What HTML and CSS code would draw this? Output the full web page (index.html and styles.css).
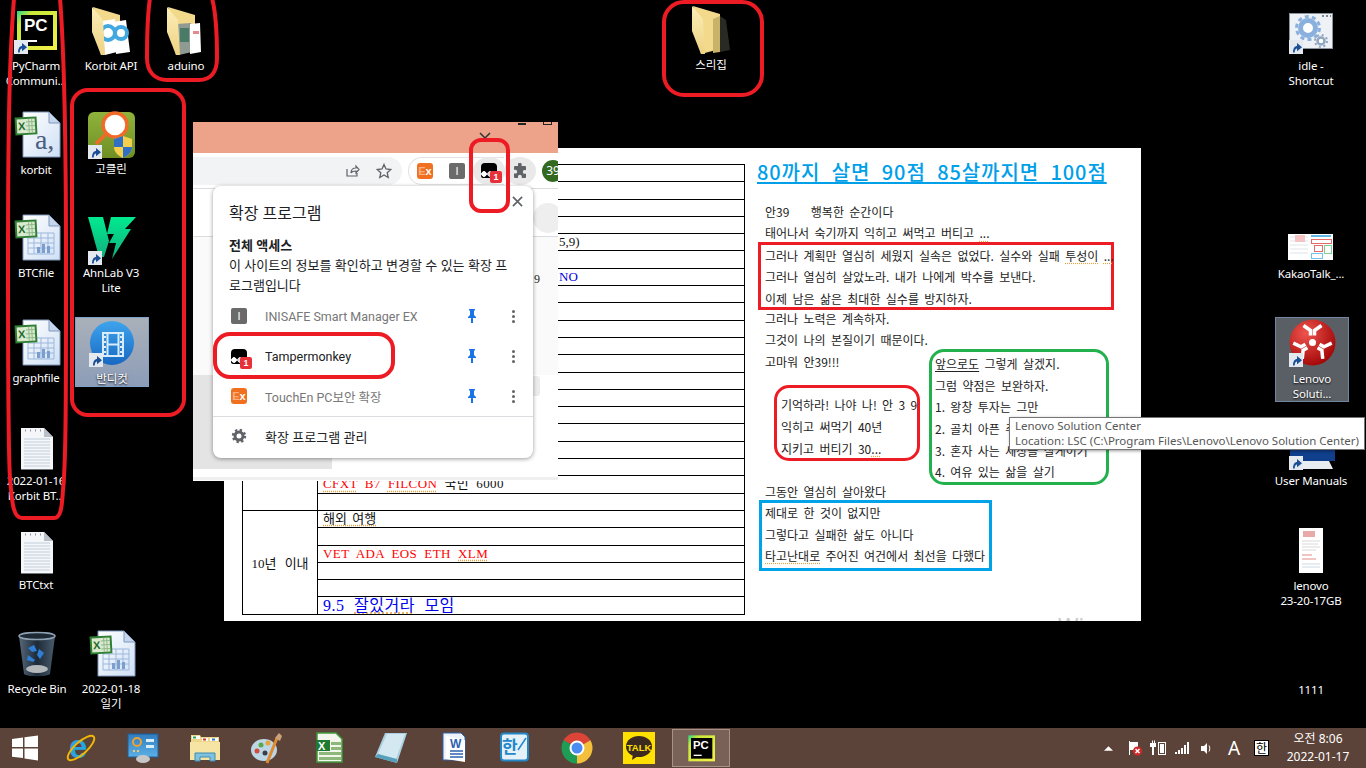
FILE: index.html
```html
<!DOCTYPE html>
<html lang="ko">
  <head>
    <meta charset="utf-8">
    <title>Desktop</title>
    <link rel="stylesheet" href="styles.css">
  </head>
  <body>
    <svg class="sprite" xmlns="http://www.w3.org/2000/svg">
      <defs>
        <linearGradient id="g-pc" x1="0" y1="0" x2="1" y2="1"><stop offset="0" stop-color="#21d789"/><stop offset=".2" stop-color="#c8e83a"/><stop offset="1" stop-color="#f4f04a"/></linearGradient>
        <linearGradient id="g-page" x1="0" y1="0" x2="1" y2="1"><stop offset="0" stop-color="#ffffff"/><stop offset="1" stop-color="#cfe0f5"/></linearGradient>
        <linearGradient id="g-flap" x1="0" y1="0" x2="0" y2="1"><stop offset="0" stop-color="#fbeeb8"/><stop offset="1" stop-color="#efd283"/></linearGradient>
        <linearGradient id="g-bin" x1="0" y1="0" x2="1" y2="0"><stop offset="0" stop-color="#56687a"/><stop offset=".5" stop-color="#1d2a38"/><stop offset="1" stop-color="#4a5c6e"/></linearGradient>
        <linearGradient id="g-goc" x1="0" y1="0" x2="0" y2="1"><stop offset="0" stop-color="#8fb33c"/><stop offset="1" stop-color="#6f8f24"/></linearGradient>
        <linearGradient id="g-v3" x1="0" y1="0" x2="0" y2="1"><stop offset="0" stop-color="#00ea8f"/><stop offset="1" stop-color="#12b07e"/></linearGradient>
        <linearGradient id="g-band" x1="0" y1="0" x2="0" y2="1"><stop offset="0" stop-color="#3fa4ec"/><stop offset="1" stop-color="#1768c2"/></linearGradient>
        <radialGradient id="g-len" cx=".35" cy=".3" r=".8"><stop offset="0" stop-color="#f0544e"/><stop offset="1" stop-color="#9c0000"/></radialGradient>
        <linearGradient id="g-cp" x1="0" y1="0" x2="0" y2="1"><stop offset="0" stop-color="#2f7cc0"/><stop offset="1" stop-color="#5cb0e4"/></linearGradient>
        <g id="sc">
          <rect width="14" height="14" fill="#e4e9ef"/>
          <path d="M4 12.5C4 8 6 6 8 6V3l5 4.2-5 4V8.6c-1.2 0-2.2 1.400-2.300 3.900z" fill="#1b4f96"/>
        </g>
        <g id="xl-badge" transform="rotate(-3 13 16)">
          <rect x="3" y="7" width="22" height="18" fill="#2f7f35"/>
          <rect x="5" y="9" width="18" height="14" fill="#dbe9cf"/>
          <path d="M14 12h9M14 16h9M14 20h9M17 9v14M20 9v14" stroke="#8fb98a"/>
          <text x="6" y="20" class="svg-bold" font-size="11" fill="#1d6b2a">X</text>
        </g>
        <g id="xl-page">
          <path d="M11 2h26l11 11v34H11z" fill="url(#g-page)" stroke="#7f97bb"/>
          <path d="M37 2v11h11z" fill="#c5d6ec" stroke="#7f97bb"/>
        </g>
        <g id="xl-grid">
          <path d="M16 20h26v21H16zM16 25h26M16 30h26M16 35h26M22 20v21M29 20v21M36 20v21" fill="none" stroke="#9bb7dc"/>
          <path d="M25 40v-6h3v6zM30 40v-9h3v9zM35 40v-7h3v7z" fill="#7c9ecf"/>
        </g>
        <g id="txt-page">
          <path d="M9 7h23l9 9v33H9z" fill="#f4f6f9"/>
          <path d="M9 49h32v-1H9z" fill="#6f7780"/>
          <path d="M32 7v9h9z" fill="#b8bfc8"/>
          <path d="M12 18h26M12 21h26M12 24h26M12 27h26M12 30h26M12 33h26M12 36h26M12 39h26M12 42h26M12 45h26" stroke="#c3cedb"/>
          <path d="M13 9.500h1M18 9.500h1M23 9.500h1M28 9.500h1" stroke="#8b9199" stroke-width="2"/>
        </g>
        <g id="pc-mark">
          <rect x="5" y="5" width="40" height="39" fill="url(#g-pc)"/>
          <rect x="9" y="9" width="32" height="31" fill="#000"/>
          <text x="12" y="25" class="svg-bold" font-size="17" fill="#fff">PC</text>
          <rect x="13" y="34" width="12" height="2" fill="#fff"/>
        </g>
        <g id="folder-back">
          <path d="M6 1l27 8v35l-19 5z" fill="#f2d98c"/>
        </g>
        <g id="folder-flap">
          <path d="M5 1l11 13 2 35h-4L5 26z" fill="url(#g-flap)"/>
        </g>
      </defs>
    </svg>

    <main class="desktop">
      <section class="doc">
        <table class="sheet">
          <tr><td class="sheet-side" rowspan="20"></td><td></td></tr>
          <tr><td></td></tr>
          <tr><td></td></tr>
          <tr><td></td></tr>
          <tr><td class="sheet-far">5,9)</td></tr>
          <tr><td></td></tr>
          <tr><td class="sheet-far sheet-blue">NO</td></tr>
          <tr><td></td></tr>
          <tr><td></td></tr>
          <tr><td></td></tr>
          <tr><td></td></tr>
          <tr><td></td></tr>
          <tr><td></td></tr>
          <tr><td></td></tr>
          <tr><td></td></tr>
          <tr><td></td></tr>
          <tr><td></td></tr>
          <tr><td></td></tr>
          <tr><td class="sheet-red"><u class="sp">CFXT</u> B7 <u class="sp">FILCON</u> <span class="sheet-ink">국빈 6000</span></td></tr>
          <tr><td></td></tr>
          <tr><td class="sheet-side" rowspan="6">10년 이내</td><td class="sheet-trip"><u class="sp">해외 여행</u></td></tr>
          <tr><td></td></tr>
          <tr><td class="sheet-red">VET ADA EOS ETH <u class="sp">XLM</u></td></tr>
          <tr><td></td></tr>
          <tr><td></td></tr>
          <tr><td class="sheet-big">9.5 <u class="sp">잘있거라</u> 모임</td></tr>
        </table>

        <div class="notes">
          <h1 class="doc-title">80까지 살면 90점 85살까지면 100점</h1>
          <p class="nl nl-in">안39 &nbsp; &nbsp;행복한 순간이다</p>
          <p class="nl nl-in">태어나서 숙기까지 익히고 써먹고 버티고 <u class="sp">...</u></p>
          <div class="box-plan">
            <p class="nl">그러나 계획만 열심히 세웠지 실속은 없었다. 실수와 실패 <u class="sp">투성이</u> <u class="sp">...</u></p>
            <p class="nl">그러나 열심히 살았노라. 내가 나에게 박수를 보낸다.</p>
            <p class="nl">이제 남은 삶은 최대한 실수를 방지하자.</p>
          </div>
          <div class="notes-split">
            <div>
              <p class="nl nl-in">그러나 노력은 계속하자.</p>
              <p class="nl nl-in">그것이 나의 본질이기 때문이다.</p>
              <p class="nl nl-in">고마워 안39!!!</p>
              <div class="box-remember">
                <p class="nl">기억하라! 나야 나! 안 3 9</p>
                <p class="nl">익히고 써먹기 40년</p>
                <p class="nl">지키고 버티기 30<u class="sp">...</u></p>
              </div>
              <p class="nl nl-in nl-after">그동안 열심히 살아왔다</p>
            </div>
            <div class="box-plan-next">
              <p class="nl"><u class="sp-plain">앞으로도</u> 그렇게 살겠지.</p>
              <p class="nl">그럼 약점은 보완하자.</p>
              <p class="nl">1. 왕창 투자는 그만</p>
              <p class="nl">2. 골치 아픈 주식 그만</p>
              <p class="nl">3. 혼자 사는 세상을 살게이기</p>
              <p class="nl">4. 여유 있는 삶을 살기</p>
            </div>
          </div>
          <div class="box-life">
            <p class="nl">제대로 한 것이 없지만</p>
            <p class="nl">그렇다고 실패한 삶도 아니다</p>
            <p class="nl"><u class="sp">타고난대로</u> 주어진 여건에서 최선을 다했다</p>
          </div>
        </div>
        <span class="doc-mark">Win</span>
      </section>

      <section class="browser">
        <div class="browser-title">
          <svg class="browser-caret" viewBox="0 0 12 7"><path d="M1 1l5 5 5-5" fill="none" stroke="#333" stroke-width="1.500"/></svg>
          <span class="browser-min"></span>
          <span class="browser-max"></span>
        </div>
        <div class="toolbar">
          <div class="omnibox">
            <svg class="tool-ico" viewBox="0 0 16 16"><path d="M3 6v7h10v-3M7 10c0-3 2-5 5-5V3l3 3.500-3 3.500V8c-2 0-4 0-5 2z" fill="none" stroke="#5f6368" stroke-width="1.200"/></svg>
            <svg class="tool-ico" viewBox="0 0 16 16"><path d="M8 1.500l2 4.500 4.800.5-3.600 3.200 1 4.800L8 12l-4.200 2.500 1-4.800L1.200 6.500 6 6z" fill="none" stroke="#5f6368" stroke-width="1.300"/></svg>
          </div>
          <div class="ext-group">
            <span class="ext-slot"><span class="ext-ex"><i>E</i>x</span></span>
            <span class="ext-slot"><span class="ext-i">I</span></span>
            <span class="ext-slot ext-on"><span class="ext-tm"><span class="tm-badge">1</span></span></span>
          </div>
          <span class="ext-slot ext-on">
            <svg class="tool-ico" viewBox="0 0 16 16"><path d="M6 1.500a1.800 1.800 0 0 1 3.600 0V3H13a1 1 0 0 1 1 1v3h-1.300a1.900 1.900 0 0 0 0 3.800H14V14a1 1 0 0 1-1 1h-3.200v-1.300a1.900 1.900 0 0 0-3.800 0V15H3a1 1 0 0 1-1-1v-3.400h1.300a1.900 1.900 0 0 0 0-3.800H2V4a1 1 0 0 1 1-1h3z" fill="#5f6368"/></svg>
          </span>
          <span class="avatar">39</span>
        </div>
        <div class="page">
          <div class="page-line"></div>
          <div class="page-soft"></div>
          <div class="page-band"></div>
          <div class="page-foot"></div>
          <span class="page-dot"></span>
          <span class="page-bar"></span>
          <span class="page-nine">9</span>
        </div>

        <div class="menu">
          <svg class="menu-close" viewBox="0 0 12 12"><path d="M1 1l10 10M11 1L1 11" stroke="#5f6368" stroke-width="1.800"/></svg>
          <h2 class="menu-title">확장 프로그램</h2>
          <h3 class="menu-head">전체 액세스</h3>
          <p class="menu-desc">이 사이트의 정보를 확인하고 변경할 수 있는 확장 프로그램입니다</p>
          <div class="menu-row">
            <span class="row-ico ext-i">I</span>
            <span class="row-name row-dim">INISAFE Smart Manager EX</span>
            <svg class="row-pin" viewBox="0 0 10 14"><path d="M2 0h6v1L7 2v4l2 2v1H6v5H4V9H1V8l2-2V2L2 1z" fill="#1a73e8"/></svg>
            <span class="row-dots"><i></i><i></i><i></i></span>
          </div>
          <div class="menu-row">
            <span class="row-ico ext-tm"><span class="tm-badge">1</span></span>
            <span class="row-name">Tampermonkey</span>
            <svg class="row-pin" viewBox="0 0 10 14"><path d="M2 0h6v1L7 2v4l2 2v1H6v5H4V9H1V8l2-2V2L2 1z" fill="#1a73e8"/></svg>
            <span class="row-dots"><i></i><i></i><i></i></span>
          </div>
          <div class="menu-row">
            <span class="row-ico ext-ex"><i>E</i>x</span>
            <span class="row-name row-dim">TouchEn PC보안 확장</span>
            <svg class="row-pin" viewBox="0 0 10 14"><path d="M2 0h6v1L7 2v4l2 2v1H6v5H4V9H1V8l2-2V2L2 1z" fill="#1a73e8"/></svg>
            <span class="row-dots"><i></i><i></i><i></i></span>
          </div>
          <div class="menu-manage">
            <svg class="manage-gear" viewBox="0 0 16 16"><circle cx="8" cy="8" r="4" fill="none" stroke="#5f6368" stroke-width="3"/><circle cx="8" cy="8" r="6" fill="none" stroke="#5f6368" stroke-width="2.400" stroke-dasharray="2.300 2.410"/></svg>
            <span>확장 프로그램 관리</span>
          </div>
        </div>
      </section>

      <!-- desktop icons -->
      <a class="desk-icon at-pycharm">
        <svg class="ico" viewBox="0 0 48 48"><use href="#pc-mark"/><use href="#sc" x="2" y="34"/></svg>
        <span>PyCharm<br>Communi...</span>
      </a>
      <a class="desk-icon at-korbitapi">
        <svg class="ico" viewBox="0 0 48 48"><use href="#folder-back"/>
          <path d="M15 15l13-2 2 33-12 3z" fill="#fff"/><path d="M26 16l13-2 4 32-14 2z" fill="#fff"/>
          <circle cx="21" cy="27" r="7" fill="none" stroke="#43a8e0" stroke-width="4"/><circle cx="34" cy="27" r="6" fill="none" stroke="#43a8e0" stroke-width="4"/>
          <use href="#folder-flap"/></svg>
        <span>Korbit API</span>
      </a>
      <a class="desk-icon at-aduino">
        <svg class="ico" viewBox="0 0 48 48"><use href="#folder-back"/>
          <path d="M15 18l14-1 1 29-13 3z" fill="#8e9a92"/><path d="M18 22h9v14h-9z" fill="#4a7a68"/><path d="M28 18l10-1 1 29-11 2z" fill="#fff"/><path d="M31 25h6v3h-6z" fill="#e58a8a"/>
          <use href="#folder-flap"/></svg>
        <span>aduino</span>
      </a>
      <a class="desk-icon at-sriz">
        <svg class="ico" viewBox="0 0 48 48"><use href="#folder-back"/>
          <path d="M33 11l6 4 4 30-10 2z" fill="#2a2a24"/><path d="M26 14l7-3v36l-7 1z" fill="#c9b26a"/>
          <use href="#folder-flap"/></svg>
        <span>스리집</span>
      </a>
      <a class="desk-icon at-idle">
        <svg class="ico" viewBox="0 0 48 48">
          <rect x="2.500" y="7.500" width="43" height="35" fill="#eef2f7" stroke="#8a939e"/>
          <path d="M35 10h2M39 10h2M43 10h1" stroke="#7d8792" stroke-width="2"/>
          <circle cx="21" cy="22" r="7.500" fill="#fff" stroke="#8ab0de" stroke-width="5"/>
          <circle cx="21" cy="22" r="11.500" fill="none" stroke="#8ab0de" stroke-width="3" stroke-dasharray="4 3.230"/>
          <circle cx="34" cy="35" r="3.500" fill="#fff" stroke="#8fa6bf" stroke-width="2.500"/>
          <circle cx="34" cy="35" r="6" fill="none" stroke="#8fa6bf" stroke-width="2" stroke-dasharray="2 2.710"/>
          <use href="#sc" x="2" y="34"/></svg>
        <span>idle -<br>Shortcut</span>
      </a>
      <a class="desk-icon at-korbit">
        <svg class="ico" viewBox="0 0 48 48"><use href="#xl-page"/>
          <text x="23" y="39" class="svg-serif" font-size="28" fill="#4a5f80">a,</text>
          <use href="#xl-badge"/></svg>
        <span>korbit</span>
      </a>
      <a class="desk-icon at-goclean">
        <svg class="ico" viewBox="0 0 48 48">
          <rect x="1" y="3" width="47" height="46" rx="6" fill="url(#g-goc)"/>
          <circle cx="28" cy="16" r="12" fill="#fff" stroke="#f06a28" stroke-width="3.500"/>
          <path d="M19 25L9 35" stroke="#f06a28" stroke-width="3.500"/>
          <path d="M27 30l9-3 9 3v8c0 6-5 9-9 11-4-2-9-5-9-11z" fill="#f4cf4d"/>
          <path d="M36 27v11h-9v-8zM36 38h9c0 6-5 9-9 11z" fill="#2f6fc4"/>
          <use href="#sc" x="1" y="36"/></svg>
        <span>고클린</span>
      </a>
      <a class="desk-icon at-btcfile">
        <svg class="ico" viewBox="0 0 48 48"><use href="#xl-page"/><use href="#xl-grid"/><use href="#xl-badge"/></svg>
        <span>BTCfile</span>
      </a>
      <a class="desk-icon at-ahnlab">
        <svg class="ico" viewBox="0 0 48 48">
          <path d="M1 4h15l6 24-5 16h-5z" fill="url(#g-v3)"/>
          <path d="M24 4h25L38 16h6L25 46l4-16h-7l5-9h-7z" fill="url(#g-v3)"/>
          <use href="#sc" x="1" y="38"/></svg>
        <span>AhnLab V3<br>Lite</span>
      </a>
      <a class="desk-icon at-graphfile">
        <svg class="ico" viewBox="0 0 48 48"><use href="#xl-page"/><use href="#xl-grid"/><use href="#xl-badge"/></svg>
        <span>graphfile</span>
      </a>
      <a class="desk-icon is-focus at-bandicut">
        <svg class="ico" viewBox="0 0 48 48">
          <circle cx="24" cy="24" r="22" fill="url(#g-band)"/>
          <rect x="15" y="14" width="20" height="23" fill="none" stroke="#d8ecfb" stroke-width="2"/>
          <path d="M19.500 14v23M30.500 14v23M19.500 25.500h11" stroke="#d8ecfb" stroke-width="2"/>
          <path d="M17 17v2M17 22v2M17 27v2M17 32v2M33 17v2M33 22v2M33 27v2M33 32v2" stroke="#d8ecfb" stroke-width="2"/>
          <use href="#sc" x="1" y="34"/></svg>
        <span>반디컷</span>
      </a>
      <a class="desk-icon is-hover at-lenovo">
        <svg class="ico" viewBox="0 0 48 48">
          <circle cx="24.500" cy="23.500" r="23" fill="url(#g-len)"/>
          <circle cx="24.500" cy="23.500" r="3.500" fill="#fff"/>
          <g fill="none" stroke="#fff" stroke-width="3.500" transform="translate(24.500 23.500)">
            <g id="len-pair">
              <path d="M-2 -7V-12L-9 -17"/>
              <path d="M2 -7V-12L9 -17"/>
            </g>
            <use href="#len-pair" transform="rotate(120)"/><use href="#len-pair" transform="rotate(240)"/>
          </g>
          <use href="#sc" x="1" y="34"/></svg>
        <span>Lenovo<br>Soluti...</span>
      </a>
      <a class="desk-icon at-korbitbt">
        <svg class="ico" viewBox="0 0 48 48"><use href="#txt-page"/></svg>
        <span>2022-01-16<br>Korbit BT...</span>
      </a>
      <a class="desk-icon at-btctxt">
        <svg class="ico" viewBox="0 0 48 48"><use href="#txt-page"/></svg>
        <span>BTCtxt</span>
      </a>
      <a class="desk-icon at-recycle">
        <svg class="ico" viewBox="0 0 48 48">
          <path d="M6 7l5 38c3 3 23 3 26 0l5-38z" fill="url(#g-bin)"/>
          <ellipse cx="24" cy="7" rx="18" ry="3.500" fill="#1c2833" stroke="#8ea2b3" stroke-width="1.500"/>
          <ellipse cx="24" cy="40" rx="11" ry="4" fill="#b5b8ba"/>
          <path d="M15 19l6-3 3 6-5 1zM26 20l5 4-4 6-3-4zM15 26l7 5-2 2-6-2z" fill="#2f7fd6"/></svg>
        <span>Recycle Bin</span>
      </a>
      <a class="desk-icon at-diary">
        <svg class="ico" viewBox="0 0 48 48"><use href="#xl-page"/><use href="#xl-grid"/><use href="#xl-badge"/></svg>
        <span>2022-01-18<br>일기</span>
      </a>
      <a class="desk-icon at-kakao">
        <svg class="ico" viewBox="0 0 48 48">
          <rect x="1" y="20" width="45" height="26" fill="#fff"/>
          <path d="M3 23h18M3 27h18M3 31h18M3 35h18M3 39h18" stroke="#dfe4ea"/>
          <rect x="8" y="21" width="10" height="7" fill="#f4c4c4"/>
          <path d="M24 22h20" stroke="#5fb8e8" stroke-width="2"/>
          <rect x="24.500" y="25.500" width="20" height="4" fill="none" stroke="#e46a6a"/>
          <rect x="27.500" y="31.500" width="8" height="6" fill="none" stroke="#e46a6a"/>
          <rect x="37.500" y="31.500" width="7" height="8" fill="none" stroke="#7bcf94"/>
          <rect x="24.500" y="39.500" width="11" height="5" fill="none" stroke="#6fc4ee"/></svg>
        <span>KakaoTalk_...</span>
      </a>
      <a class="desk-icon at-manuals">
        <svg class="ico" viewBox="0 0 48 48">
          <rect x="3" y="12" width="45" height="28" fill="#103f8c"/>
          <path d="M10 40h32l4 8H6z" fill="#e8edf2"/>
          <use href="#sc" x="2" y="35"/></svg>
        <span>User Manuals</span>
      </a>
      <a class="desk-icon at-lenovodoc">
        <svg class="ico" viewBox="0 0 48 48">
          <rect x="12" y="2" width="24" height="45" fill="#fff"/>
          <rect x="16" y="5" width="12" height="6" fill="#e8a9a9"/>
          <path d="M15 15h18M15 18h16M15 21h18M15 24h14" stroke="#d8d8d8"/>
          <path d="M15 29h10M15 33h14" stroke="#e58a8a"/>
          <path d="M15 38h18M15 41h18" stroke="#cfd8e6"/></svg>
        <span>lenovo<br>23-20-17GB</span>
      </a>
      <a class="desk-icon at-1111">
        <svg class="ico" viewBox="0 0 48 48"></svg>
        <span>1111</span>
      </a>

      <!-- hand drawn marks -->
      <svg class="marks" viewBox="0 0 1366 728">
        <g fill="none" stroke="#ed1c24" stroke-width="4">
          <path d="M14-2C10 50 8 110 8 260c0 120 0 190 2 218 2 28 4 40 12 40h32c8 0 8-16 9-28 3-30 3-90 3-230C66 120 64 50 60-2"/>
          <rect x="72" y="90" width="112" height="325" rx="16"/>
          <path d="M150-2c-3 20-3 50-3 60 0 14 8 22 20 22h32c12 0 18-8 18-22 0-15-1-45-5-60"/>
          <rect x="664" y="2" width="98" height="93" rx="20"/>
          <rect x="471" y="140" width="37" height="71" rx="10"/>
          <rect x="215" y="334" width="178" height="43" rx="15"/>
        </g>
      </svg>

      <div class="tip">
        <p>Lenovo Solution Center</p>
        <p>Location: LSC (C:\Program Files\Lenovo\Lenovo Solution Center)</p>
      </div>
    </main>

    <footer class="taskbar">
      <span class="start">
        <svg viewBox="0 0 26 26"><path d="M0 4l11-1.500V12H0zM12.500 2.300L26 .5V12H12.500zM0 13.500h11V23L0 21.700zM12.500 13.500H26V25.500L12.500 23.600z" fill="#fff"/></svg>
      </span>
      <span class="task">
        <svg viewBox="0 0 32 32"><text x="4" y="26" class="svg-bold" font-size="33" fill="#27a5e0">e</text><ellipse cx="16" cy="16" rx="17" ry="6" transform="rotate(-42 16 16)" fill="none" stroke="#f2b705" stroke-width="2"/></svg>
      </span>
      <span class="task">
        <svg viewBox="0 0 32 32"><rect x="1" y="2" width="30" height="23" fill="url(#g-cp)" stroke="#1f5e9c"/><circle cx="10" cy="10" r="4" fill="none" stroke="#f2a030" stroke-width="2"/><path d="M19 7h8v3h-8zM19 13h8v3h-8z" fill="#d8ecfa"/><path d="M6 18h2v2H6zM10 18h2v2h-2z" fill="#f7c873"/><ellipse cx="16" cy="27" rx="7" ry="4" fill="#c7c7c7"/></svg>
      </span>
      <span class="task">
        <svg viewBox="0 0 32 32"><path d="M2 3h9l1 2h18v23H2z" fill="#eed68a"/><path d="M3 4h8v3H3zM13 6h6v3h-6zM21 6h8v3h-8z" fill="#fff"/><path d="M4 4.500h3v2H4z" fill="#2da44e"/><path d="M14 6.500h3v2h-3z" fill="#c63a2a"/><path d="M23 6.500h3v2h-3z" fill="#2a7ac6"/><path d="M1 10h30v18H1z" fill="#f5e4a4"/><path d="M6 21h20v8h-5v-4H11v4H6z" fill="#7fc1de" stroke="#3f8db4"/></svg>
      </span>
      <span class="task">
        <svg viewBox="0 0 32 32"><ellipse cx="13" cy="18" rx="13" ry="11" fill="#bcd6e6"/><circle cx="6" cy="19" r="2.500" fill="#d24a3a"/><circle cx="10" cy="13" r="2.500" fill="#5aa84a"/><circle cx="17" cy="11" r="2.500" fill="#eaa23a"/><circle cx="14" cy="21" r="2.500" fill="#3a3f46"/><path d="M26 6L16 31" stroke="#e08a30" stroke-width="3"/><path d="M24 6l4-5 3 3-2 5z" fill="#c9a27a"/></svg>
      </span>
      <span class="task">
        <svg viewBox="0 0 32 32"><path d="M4 1h19l6 6v23H4z" fill="#f4f6ee" stroke="#3f9a3a" stroke-width="1.500"/><rect x="3" y="8" width="14" height="11" fill="#1f7a32"/><text x="5" y="17.500" class="svg-bold" font-size="11" fill="#fff">X</text><path d="M18 10h10v3H18zM18 15h10v3H18zM6 20h22v3H6zM6 25h22v3H6z" fill="#8db87a"/></svg>
      </span>
      <span class="task">
        <svg viewBox="0 0 32 32"><path d="M10 1h22L22 31 0 25z" fill="#a9cfe0"/><path d="M12 2h18l-9 25L3 22z" fill="#d3e8f1"/><path d="M0 25l3-3 19 5-0 4z" fill="#57a0bb"/></svg>
      </span>
      <span class="task">
        <svg viewBox="0 0 32 32"><path d="M6 1h18l4 4v23H6z" fill="#eef2fa" stroke="#2f62b0"/><path d="M9 4L28 8v22L9 27z" fill="#fff"/><text x="13" y="16" class="svg-bold" font-size="12" fill="#2f62b0">W</text><path d="M13 19h13M13 22h13M13 25h13" stroke="#2f62b0" stroke-width="1.500"/></svg>
      </span>
      <span class="task">
        <svg viewBox="0 0 32 32"><rect x="2" y="1.500" width="27" height="27" rx="3" fill="#e4f1f8" stroke="#2387c8" stroke-width="2"/><text x="3" y="21" class="svg-kr" font-size="17" fill="#2387c8">한</text><path d="M27 6L19 18" stroke="#2387c8" stroke-width="1.500"/></svg>
      </span>
      <span class="task">
        <svg viewBox="0 0 32 32"><g fill="none" stroke-width="9"><circle cx="16" cy="16" r="11" stroke="#db4437" stroke-dasharray="23.040 46.080" transform="rotate(-150 16 16)"/><circle cx="16" cy="16" r="11" stroke="#f4c03c" stroke-dasharray="23.040 46.080" transform="rotate(-30 16 16)"/><circle cx="16" cy="16" r="11" stroke="#1f9d55" stroke-dasharray="23.040 46.080" transform="rotate(90 16 16)"/></g><circle cx="16" cy="16" r="7.500" fill="#fff"/><circle cx="16" cy="16" r="5.500" fill="#4a8cf0"/></svg>
      </span>
      <span class="task">
        <svg viewBox="0 0 32 32"><rect width="32" height="32" fill="#ffe000"/><ellipse cx="16" cy="14.500" rx="13" ry="10.500" fill="#3c2a20"/><path d="M10 22l-1 6 6-4z" fill="#3c2a20"/><text x="16" y="18.500" text-anchor="middle" class="svg-bold" font-size="9.500" fill="#ffe000">TALK</text></svg>
      </span>
      <span class="task is-active">
        <svg viewBox="0 0 48 48"><use href="#pc-mark"/></svg>
      </span>

      <div class="tray">
        <svg class="tray-up" viewBox="0 0 10 6"><path d="M0 6l5-5 5 5z" fill="#fff"/></svg>
        <svg class="tray-ico" viewBox="0 0 18 18"><path d="M4 2h1v14H4zM5 3h8v8H5z" fill="#fff"/><circle cx="12.500" cy="12" r="4.500" fill="#d6282a"/><path d="M10.500 10l4 4M14.500 10l-4 4" stroke="#fff" stroke-width="1.500"/></svg>
        <svg class="tray-ico" viewBox="0 0 18 18"><path d="M1 4h2V1.500h1V4h1V1.500h1V4h1v4H5v8H3V8H1z" fill="#fff"/><rect x="9.500" y="3.500" width="7" height="12" fill="none" stroke="#fff"/><rect x="11" y="5" width="4" height="9" fill="#fff"/></svg>
        <svg class="tray-ico" viewBox="0 0 18 18"><path d="M2 13h2v2H2zM5 11h2v4H5zM8 9h2v6H8zM11 6h2v9h-2zM14 3h2v12h-2z" fill="#fff"/></svg>
        <svg class="tray-ico" viewBox="0 0 18 18"><path d="M4 7h3l3-3v11l-3-3H4z" fill="#fff"/><path d="M12 6.500c1 1.500 1 4.500 0 6" fill="none" stroke="#fff"/></svg>
        <span class="tray-ime">A</span>
        <span class="tray-han">한</span>
        <div class="clock">오전 8:06<br>2022-01-17</div>
      </div>
    </footer>
  </body>
</html>
```

FILE: styles.css
```css
* {
  box-sizing: border-box;
}
html, body {
  margin: 0;
  padding: 0;
  width: 1366px;
  height: 768px;
  overflow: hidden;
  background: #000;
}
body {
  font-family: "Noto Sans", "Noto Sans CJK KR", sans-serif;
}
p, h1, h2, h3 {
  margin: 0;
  font-weight: normal;
}
.sprite {
  position: absolute;
  width: 0;
  height: 0;
}
.svg-bold {
  font-family: "Liberation Sans", sans-serif;
  font-weight: 700;
}
.svg-serif {
  font-family: "Liberation Serif", serif;
}
.svg-kr {
  font-family: "Noto Sans CJK KR", sans-serif;
  font-weight: 700;
}
.desktop {
  position: relative;
  width: 1366px;
  height: 728px;
  overflow: hidden;
}

/* document behind the browser */
.doc {
  position: absolute;
  left: 224px;
  top: 148px;
  width: 917px;
  height: 473px;
  background: #fff;
  padding: 16px 0 0 18px;
  display: flex;
  gap: 12px;
  overflow: hidden;
  color: #222;
  font-family: "Noto Sans CJK KR", sans-serif;
}
.doc-mark {
  position: absolute;
  left: 834px;
  top: 462px;
  color: #c9c9c9;
  font: 22px "Noto Sans", sans-serif;
}
.sheet {
  border-collapse: collapse;
  width: 503px;
  height: 451px;
  flex: none;
  font-family: "Liberation Serif", "Noto Sans CJK KR", serif;
  font-size: 13px;
  color: #111;
  table-layout: fixed;
}
.sheet td {
  border: 1px solid #000;
  height: 17px;
  padding: 0 0 0 5px;
  line-height: 14px;
  white-space: nowrap;
  overflow: hidden;
}
.sheet .sheet-side {
  width: 75px;
  padding: 4px 0 0;
  text-align: center;
  word-spacing: 5px;
}
.sheet .sheet-far {
  padding-left: 241px;
}
.sheet-blue {
  color: #0000e0;
}
.sheet-red {
  color: #f00;
  letter-spacing: .4px;
  word-spacing: 3.500px;
}
.sheet-ink {
  color: #111;
}
.sheet-trip {
  word-spacing: 2px;
}
.sheet-big {
  color: #0000f0;
  font-size: 16px;
  letter-spacing: .5px;
  word-spacing: 5px;
}
.sp {
  text-decoration: underline dotted #e8a33d;
  text-underline-offset: 2px;
}
.sp-plain {
  text-decoration: underline;
  text-underline-offset: 2px;
}
.notes {
  width: 360px;
  flex: none;
  font-size: 12px;
  word-spacing: 2px;
}
.doc-title {
  margin: -2px 0 19px;
  font-size: 20px;
  font-weight: 500;
  line-height: 20px;
  color: #00a0e9;
  letter-spacing: .9px;
  word-spacing: 5px;
  text-decoration: underline;
  text-underline-offset: 2px;
  text-decoration-thickness: 1.500px;
  white-space: nowrap;
}
.nl {
  line-height: 21.4px;
  white-space: nowrap;
}
.nl-in {
  padding-left: 8px;
}
.nl-after {
  margin: 20px 0 -2px;
}
.box-plan {
  width: 356px;
  height: 68px;
  margin: -2px 0 -2px 1px;
  padding-left: 4px;
  border: 3px solid #ed1c24;
}
.notes-split {
  display: grid;
  grid-template-columns: 172px 180px;
}
.box-remember {
  width: 146px;
  height: 76px;
  margin: 13px 0 0 17px;
  padding: 6px 0 0 4px;
  border: 3px solid #ed1c24;
  border-radius: 15px;
}
.box-remember .nl {
  line-height: 21.800px;
}
.box-plan-next {
  height: 136px;
  margin-top: 41px;
  padding: 1px 0 0 3px;
  border: 3px solid #22b14c;
  border-radius: 15px;
}
.box-plan-next .nl {
  line-height: 21.700px;
}
.box-life {
  width: 233px;
  height: 71px;
  margin-left: 2px;
  padding: 0 0 0 3px;
  border: 3px solid #00a2e8;
}
.box-life .nl:first-child {
  margin-top: -1px;
}

/* cropped browser shot */
.browser {
  position: absolute;
  left: 193px;
  top: 122px;
  width: 365px;
  height: 359px;
  background: #fff;
  overflow: hidden;
}
.browser-title {
  position: relative;
  height: 31px;
  background: #eda28a;
}
.browser-caret {
  position: absolute;
  left: 286px;
  top: 10px;
  width: 12px;
  height: 7px;
}
.browser-min {
  position: absolute;
  left: 325px;
  top: 1px;
  width: 8px;
  height: 2px;
  background: #222;
}
.browser-max {
  position: absolute;
  left: 350px;
  top: -6px;
  width: 9px;
  height: 9px;
  border: 1px solid #222;
}
.toolbar {
  height: 35px;
  display: flex;
  align-items: center;
}
.omnibox {
  width: 209px;
  height: 28px;
  flex: none;
  background: #f1f3f4;
  border-radius: 0 14px 14px 0;
  display: flex;
  align-items: center;
  justify-content: flex-end;
  gap: 16px;
  padding-right: 10px;
}
.tool-ico {
  width: 16px;
  height: 16px;
}
.ext-group {
  width: 96px;
  height: 28px;
  flex: none;
  margin-left: 6px;
  border: 1px solid #e3e3e3;
  border-radius: 14px 0 0 14px;
  border-right: none;
  display: flex;
  align-items: center;
}
.ext-slot {
  width: 32px;
  height: 28px;
  flex: none;
  display: flex;
  align-items: center;
  justify-content: center;
}
.ext-on {
  background: #e9e9e9;
  border-radius: 50%;
}
.ext-ex {
  width: 16px;
  height: 16px;
  border-radius: 3px;
  background: #f07020;
  color: #fff;
  font: 700 11px/16px "Liberation Sans", sans-serif;
  text-align: center;
  display: block;
}
.ext-ex i {
  font-style: normal;
  color: #f4b080;
}
.ext-i {
  width: 16px;
  height: 16px;
  border-radius: 2px;
  background: #6a6a6a;
  color: #fff;
  font: 400 11px/16px "Liberation Sans", sans-serif;
  text-align: center;
  display: block;
}
.ext-tm {
  position: relative;
  display: block;
  width: 16px;
  height: 15px;
  border-radius: 4px 4px 6px 2px;
  background: radial-gradient(circle at 3px 11px, #fff 2.500px, transparent 3px),
              radial-gradient(circle at 9px 11px, #ddd 2.500px, transparent 3px),
              #000;
}
.tm-badge {
  position: absolute;
  left: 9px;
  top: 8px;
  width: 12px;
  height: 12px;
  border-radius: 2px;
  background: #e8303a;
  color: #fff;
  font: 700 9px/12px "Liberation Sans", sans-serif;
  text-align: center;
}
.avatar {
  width: 22px;
  height: 22px;
  flex: none;
  margin-left: 6px;
  border-radius: 50%;
  background: #33691e;
  color: #fff;
  font-size: 12px;
  line-height: 22px;
  text-align: center;
}
.page {
  position: relative;
  height: 293px;
  border-top: 1px solid #dadce0;
}
.page-line {
  height: 48px;
  border-bottom: 1px solid #dadce0;
}
.page-soft {
  height: 138px;
  background: #fafafa;
}
.page-band {
  width: 139px;
  height: 94px;
  background: #e4e4e4;
}
.page-foot {
  height: 3px;
  margin-top: 8px;
  background: #efefef;
}
.page-dot {
  position: absolute;
  left: 340px;
  top: 14px;
  width: 30px;
  height: 30px;
  border-radius: 50%;
  background: #eee;
}
.page-bar {
  position: absolute;
  left: 320px;
  top: 187px;
  width: 27px;
  height: 20px;
  border-radius: 3px;
  background: #ececec;
}
.page-nine {
  position: absolute;
  left: 341px;
  top: 83px;
  font: 12px "Liberation Serif", serif;
  color: #222;
}
.menu {
  position: absolute;
  left: 20px;
  top: 64px;
  width: 320px;
  height: 272px;
  background: #fff;
  border-radius: 8px;
  box-shadow: 0 1px 4px rgba(0, 0, 0, .4);
  padding-top: 16px;
  color: #202124;
  font-size: 13px;
  font-family: "Noto Sans", "Noto Sans CJK KR", sans-serif;
}
.menu-close {
  position: absolute;
  right: 10px;
  top: 10px;
  width: 11px;
  height: 11px;
}
.menu-title {
  margin-left: 16px;
  font-size: 16px;
  line-height: 22px;
}
.menu-head {
  margin: 11px 0 0 16px;
  font-size: 13px;
  line-height: 20px;
  font-weight: 700;
}
.menu-desc {
  margin: 0 16px 1px;
  line-height: 20px;
}
.menu-row {
  height: 40px;
  display: flex;
  align-items: center;
  padding-left: 18px;
}
.row-ico {
  flex: none;
}
.row-name {
  flex: 1;
  margin-left: 18px;
  font-family: Roboto, "Noto Sans CJK KR", sans-serif;
  font-size: 12.500px;
}
.row-dim {
  color: #777;
}
.row-pin {
  width: 10px;
  height: 14px;
  margin-right: 35px;
}
.row-dots {
  display: flex;
  flex-direction: column;
  gap: 2px;
  margin-right: 18px;
}
.row-dots i {
  width: 3px;
  height: 3px;
  border-radius: 50%;
  background: #5f6368;
}
.menu-manage {
  height: 42px;
  padding: 0 0 3px 18px;
  border-top: 1px solid #dadce0;
  display: flex;
  align-items: center;
  gap: 18px;
}
.manage-gear {
  width: 16px;
  height: 16px;
}

/* desktop icons */
.desk-icon {
  position: absolute;
  width: 74px;
  display: flex;
  flex-direction: column;
  align-items: center;
  color: #fff;
  font-size: 11.500px;
  letter-spacing: -.150px;
  line-height: 15px;
  text-align: center;
  white-space: nowrap;
}
.ico {
  width: 48px;
  height: 48px;
  flex: none;
  margin-bottom: 4px;
  overflow: visible;
}
.is-focus {
  height: 70px;
  padding-top: 1px;
  background: linear-gradient(#a9b0b9, #8d9db8);
  border: 1px solid #7ea2cc;
  text-shadow: 0 1px 2px #000;
}
.is-hover {
  height: 85px;
  padding-top: 1px;
  background: #5a5f66;
  border: 1px solid #70869f;
  text-shadow: 0 1px 2px #000;
}
.at-pycharm { left: -1px; top: 6px; }
.at-korbitapi { left: 74px; top: 6px; }
.at-aduino { left: 149px; top: 6px; }
.at-sriz { left: 674px; top: 5px; }
.at-idle { left: 1274px; top: 6px; }
.at-korbit { left: -1px; top: 110px; }
.at-goclean { left: 74px; top: 109px; }
.at-btcfile { left: -1px; top: 213px; }
.at-ahnlab { left: 74px; top: 213px; }
.at-graphfile { left: -1px; top: 318px; }
.at-bandicut { left: 75px; top: 317px; }
.at-lenovo { left: 1275px; top: 317px; }
.at-korbitbt { left: -1px; top: 421px; }
.at-btctxt { left: -1px; top: 525px; }
.at-recycle { left: 0; top: 629px; }
.at-diary { left: 74px; top: 629px; }
.at-kakao { left: 1274px; top: 214px; }
.at-manuals { left: 1274px; top: 421px; }
.at-lenovodoc { left: 1274px; top: 526px; }
.at-1111 { left: 1274px; top: 630px; }

.marks {
  position: absolute;
  left: 0;
  top: 0;
  width: 1366px;
  height: 728px;
  pointer-events: none;
}
.tip {
  position: absolute;
  left: 1009px;
  top: 417px;
  width: 356px;
  height: 33px;
  padding: 0 5px;
  background: #fff;
  border: 1px solid #767676;
  box-shadow: 1px 1px 3px rgba(0, 0, 0, .4);
  color: #575757;
  font-size: 11.500px;
  line-height: 15px;
  white-space: nowrap;
}

/* taskbar */
.taskbar {
  height: 40px;
  display: flex;
  align-items: center;
  background: #5c4339;
}
.start {
  width: 50px;
  height: 40px;
  flex: none;
  display: flex;
  align-items: center;
  justify-content: center;
}
.start svg {
  width: 26px;
  height: 26px;
}
.task {
  width: 62px;
  height: 38px;
  flex: none;
  display: flex;
  align-items: center;
  justify-content: center;
}
.task svg {
  width: 32px;
  height: 32px;
  overflow: visible;
}
.task.is-active {
  width: 58px;
  margin-left: 2px;
  background: #7a6157;
  border: 1px solid #a5928a;
}
.tray {
  margin-left: auto;
  display: flex;
  align-items: center;
  color: #fff;
}
.tray-up {
  width: 9px;
  height: 6px;
  margin-right: 12px;
}
.tray-ico {
  width: 18px;
  height: 18px;
  margin-right: 6px;
}
.tray-ime {
  width: 26px;
  font-size: 19px;
  line-height: 26px;
  text-align: center;
}
.tray-han {
  width: 15px;
  height: 16px;
  margin: 0 14px 0 7px;
  background: #fff;
  border: 1px solid #000;
  color: #000;
  font: 12px/14px "Noto Sans CJK KR", sans-serif;
  text-align: center;
}
.clock {
  width: 70px;
  margin-right: 13px;
  font-size: 12px;
  line-height: 18px;
  text-align: center;
}
```
